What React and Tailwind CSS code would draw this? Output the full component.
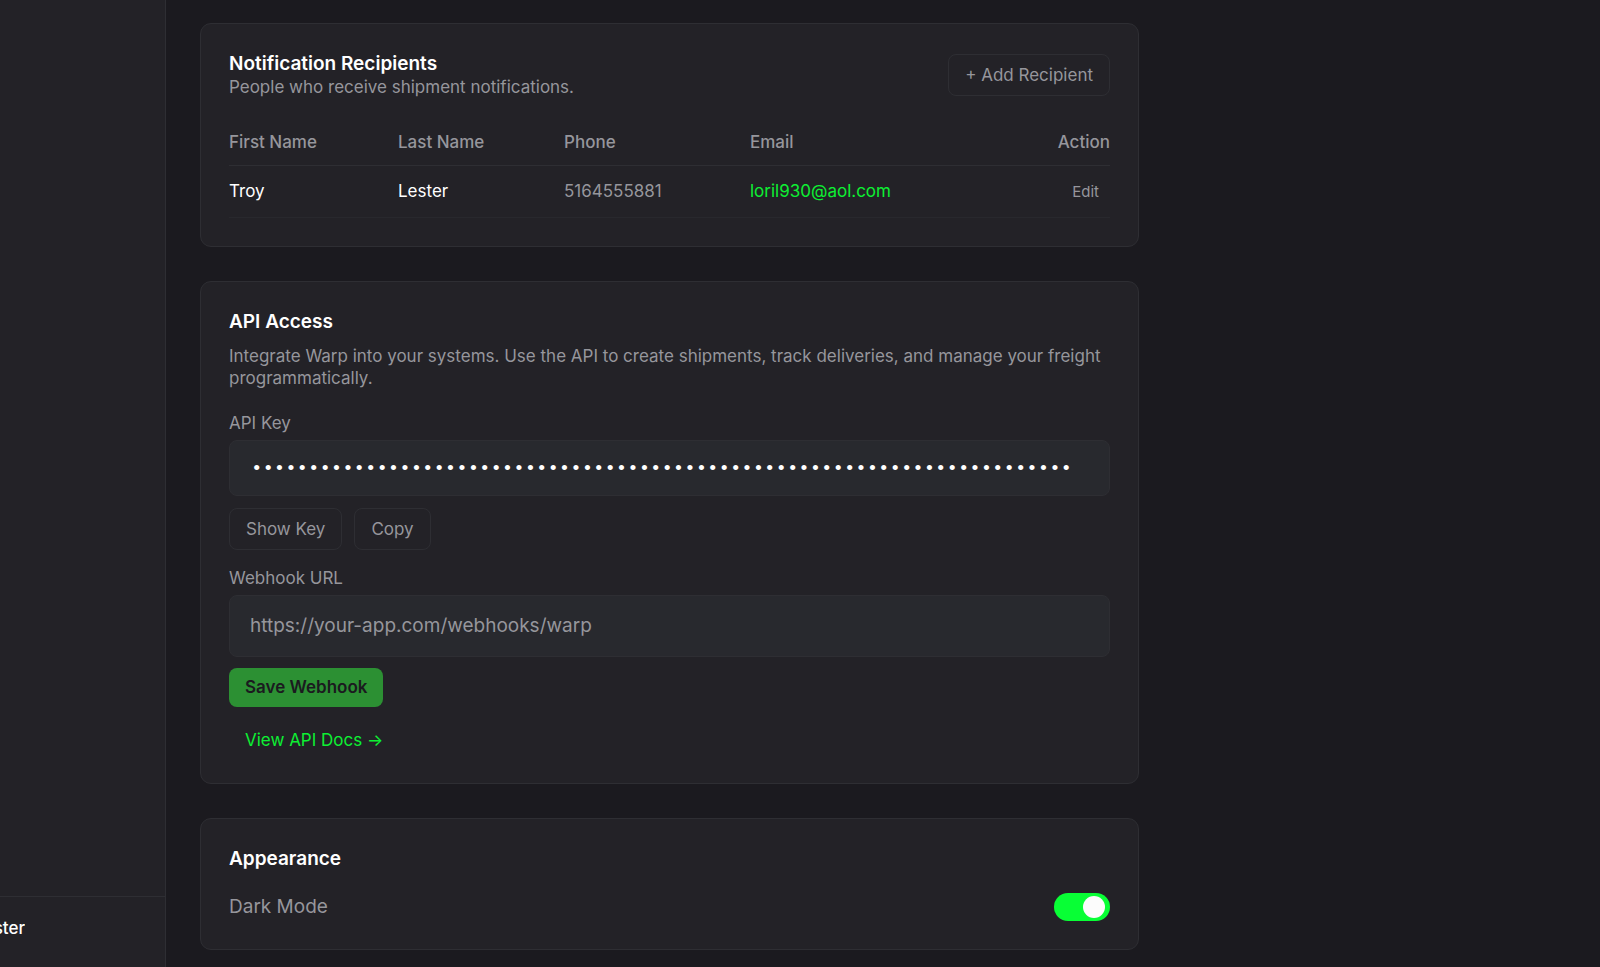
import { useState } from 'react';

const API_KEY_MASK = '•'.repeat(72);

const recipients = [
  { firstName: 'Troy', lastName: 'Lester', phone: '5164555881', email: 'loril930@aol.com' },
];

// Rounded panel used for every settings section
function Card({ children }) {
  return (
    <section className="rounded-[11px] border border-[#2e2e33] bg-[#232227] p-7">
      {children}
    </section>
  );
}

function CardTitle({ children }) {
  return <h2 className="text-[19px] leading-[24px] font-semibold text-white">{children}</h2>;
}

function OutlineButton({ children, onClick }) {
  return (
    <button
      type="button"
      onClick={onClick}
      className="h-[42px] rounded-lg border border-[#2e2e33] px-4 text-[#96969c]"
    >
      {children}
    </button>
  );
}

function App() {
  const [webhook, setWebhook] = useState('');
  const [darkMode, setDarkMode] = useState(true);

  return (
    <div className="flex min-h-screen bg-[#1b1a1f] font-['Inter',sans-serif] text-[17px] leading-[22px] text-[#96969c]">
      {/* Sidebar */}
      <aside className="flex w-[166px] shrink-0 flex-col justify-end border-r border-[#2e2e33] bg-[#232227]">
        <div className="border-t border-[#2e2e33] pt-5 pb-7">
          <div className="flex w-[25px] justify-end overflow-hidden font-medium text-white">ster</div>
        </div>
      </aside>

      <main className="min-w-0 flex-1 px-[34px] pt-[23px] pb-4">
        <div className="flex max-w-[939px] flex-col gap-[34px]">
          {/* Notification recipients */}
          <Card>
            <div className="flex items-center justify-between">
              <div>
                <CardTitle>Notification Recipients</CardTitle>
                <p>People who receive shipment notifications.</p>
              </div>
              <OutlineButton>+ Add Recipient</OutlineButton>
            </div>
            <table className="mt-[21px] w-full table-fixed text-left">
              <thead>
                <tr className="h-[46px] border-b border-[#2e2e33]">
                  <th className="w-[169px] font-medium">First Name</th>
                  <th className="w-[166px] font-medium">Last Name</th>
                  <th className="w-[186px] font-medium">Phone</th>
                  <th className="font-medium">Email</th>
                  <th className="w-[106px] text-right font-medium">Action</th>
                </tr>
              </thead>
              <tbody>
                {recipients.map((r) => (
                  <tr key={r.email} className="h-[52px] border-b border-[#28282d]">
                    <td className="text-white">{r.firstName}</td>
                    <td className="text-white">{r.lastName}</td>
                    <td>{r.phone}</td>
                    <td className="text-[#0df033]">{r.email}</td>
                    <td className="text-right">
                      <button type="button" className="px-[11px] text-[15px]">Edit</button>
                    </td>
                  </tr>
                ))}
              </tbody>
            </table>
          </Card>

          {/* API access */}
          <Card>
            <CardTitle>API Access</CardTitle>
            <p className="mt-[11px]">
              Integrate Warp into your systems. Use the API to create shipments, track deliveries, and manage your freight programmatically.
            </p>

            <label htmlFor="api-key" className="mt-[23px] block">API Key</label>
            <input
              id="api-key"
              type="text"
              readOnly
              value={API_KEY_MASK}
              className="mt-[6px] block h-14 w-full rounded-lg border border-[#2e2e33] bg-[#28292e] px-[21px] pt-[2px] text-[19px] font-['Liberation_Mono',monospace] text-white outline-none"
            />
            <div className="mt-3 flex gap-3">
              <OutlineButton>Show Key</OutlineButton>
              <OutlineButton>Copy</OutlineButton>
            </div>

            <label htmlFor="webhook-url" className="mt-[17px] block">Webhook URL</label>
            <input
              id="webhook-url"
              type="url"
              value={webhook}
              onChange={(e) => setWebhook(e.target.value)}
              placeholder="https://your-app.com/webhooks/warp"
              className="mt-[6px] block h-[62px] w-full rounded-lg border border-[#2e2e33] bg-[#28292e] px-5 text-[19px] text-white outline-none placeholder:text-[#96969c]"
            />
            <button
              type="button"
              className="mt-[11px] block h-[39px] rounded-lg bg-[#2c9033] px-4 font-semibold text-[#1b1a1f]"
            >
              Save Webhook
            </button>
            <a href="#docs" className="mt-[22px] ml-4 mb-1 inline-block text-[#0df033]">View API Docs →</a>
          </Card>

          {/* Appearance */}
          <Card>
            <CardTitle>Appearance</CardTitle>
            <div className="mt-[22px] flex items-center justify-between">
              <label htmlFor="dark-mode" className="text-[19px]">Dark Mode</label>
              <input
                id="dark-mode"
                type="checkbox"
                role="switch"
                checked={darkMode}
                onChange={(e) => setDarkMode(e.target.checked)}
                className="flex h-7 w-14 appearance-none items-center rounded-full bg-[#45454b] px-[5px] before:size-[22px] before:rounded-full before:bg-[#fcfcfc] before:content-[''] checked:justify-end checked:bg-[#08ff35]"
              />
            </div>
          </Card>
        </div>
      </main>
    </div>
  );
}

export default App;
